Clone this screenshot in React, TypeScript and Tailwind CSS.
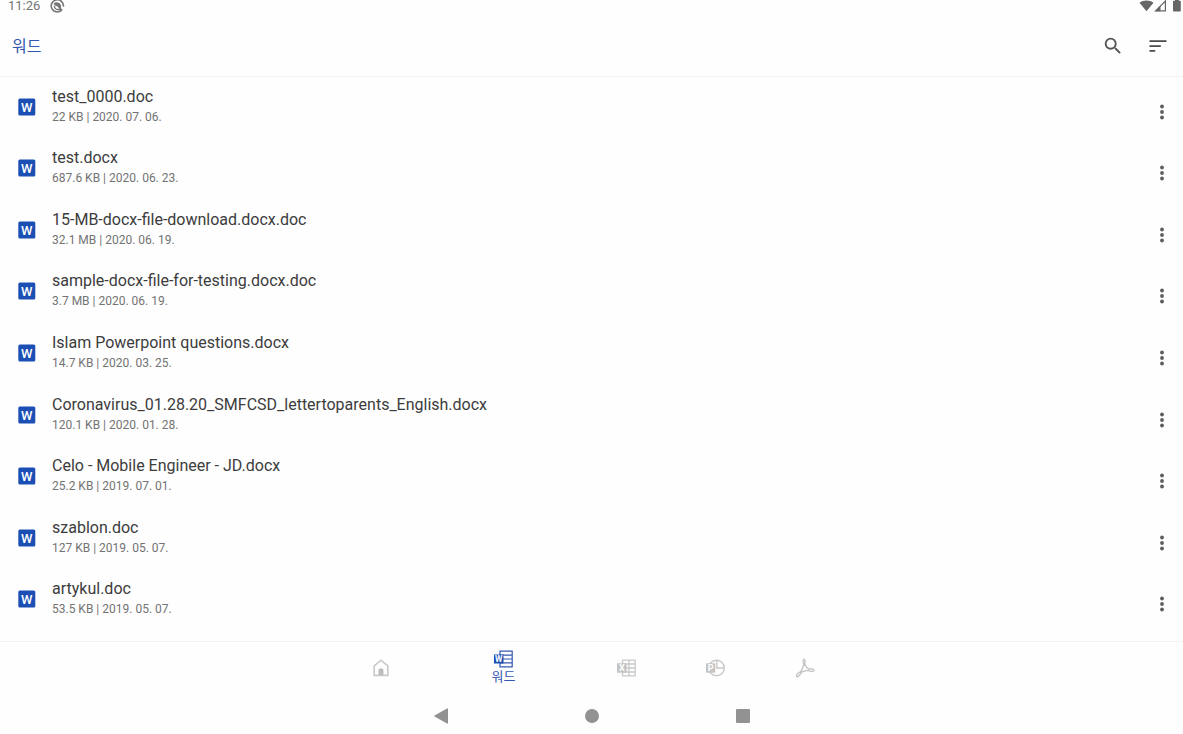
import type { ReactNode } from 'react';

type FileEntry = { name: string; size: string; date: string };

const files: FileEntry[] = [
  { name: 'test_0000.doc', size: '22 KB', date: '2020. 07. 06.' },
  { name: 'test.docx', size: '687.6 KB', date: '2020. 06. 23.' },
  { name: '15-MB-docx-file-download.docx.doc', size: '32.1 MB', date: '2020. 06. 19.' },
  { name: 'sample-docx-file-for-testing.docx.doc', size: '3.7 MB', date: '2020. 06. 19.' },
  { name: 'Islam Powerpoint questions.docx', size: '14.7 KB', date: '2020. 03. 25.' },
  { name: 'Coronavirus_01.28.20_SMFCSD_lettertoparents_English.docx', size: '120.1 KB', date: '2020. 01. 28.' },
  { name: 'Celo - Mobile Engineer - JD.docx', size: '25.2 KB', date: '2019. 07. 01.' },
  { name: 'szablon.doc', size: '127 KB', date: '2019. 05. 07.' },
  { name: 'artykul.doc', size: '53.5 KB', date: '2019. 05. 07.' },
];

function StatusBar() {
  return (
    <div className="flex h-4 shrink-0 items-start justify-between pr-px pl-2 text-[#757575]">
      <div className="flex items-start gap-2.5">
        <span className="text-[13px] leading-3">11:26</span>
        <svg width="15" height="13" viewBox="0 0 15 13" fill="none" stroke="currentColor" aria-hidden="true">
          <path d="M12.2 9.6A6.1 6.1 0 1 1 13.4 6.6" strokeWidth="1.6" />
          <path d="M3.6 3.4C6.3 1.4 9.6 2.3 11 5.4V9H9.6L7.6 6.6 5 5.4Z" fill="currentColor" stroke="none" />
          <path d="M4.4 5.6C4.2 7.9 5.6 9.5 7.6 9.5H12" strokeWidth="1.4" />
        </svg>
      </div>
      <svg width="43" height="12" viewBox="0 0 43 12" fill="#666" aria-hidden="true">
        <path d="M0.5 2.8C4.5 -0.4 10.5 -0.4 14.5 2.8L7.5 11.3Z" />
        <path d="M16.6 10.8 26.4 1V10.8Z" fill="none" stroke="#666" strokeWidth="1.2" />
        <path d="M16 11.2 21.5 5.7V11.2Z" />
        <path d="M34 1.5Q34 .7 34.8 .7H36V0H39.8V.7H41Q41.8 .7 41.8 1.5V10.5Q41.8 11.4 41 11.4H34.8Q34 11.4 34 10.5Z" />
      </svg>
    </div>
  );
}

function SearchIcon() {
  return (
    <svg width="22" height="22" viewBox="0 0 24 24" fill="#555" aria-hidden="true">
      <path d="M15.5 14h-.79l-.28-.27A6.47 6.47 0 0 0 16 9.5 6.5 6.5 0 1 0 9.5 16c1.61 0 3.09-.59 4.23-1.57l.27.28v.79l5 4.99L20.49 19l-4.99-5zm-6 0C7.01 14 5 11.99 5 9.5S7.01 5 9.5 5 14 7.01 14 9.5 11.99 14 9.5 14z" />
    </svg>
  );
}

function SortIcon() {
  return (
    <svg width="18" height="12" viewBox="0 0 18 12" fill="#4a4a4a" aria-hidden="true">
      <path d="M.5 .3h17v1.7H.5zM.5 5.2h11.3v1.7H.5zM.5 10h5.7v1.7H.5z" />
    </svg>
  );
}

function WordFileIcon() {
  return (
    <svg className="shrink-0" width="18" height="18" viewBox="0 0 18 18" aria-hidden="true">
      <rect x="0.3" y="0.5" width="17" height="17" rx="1.5" fill="#1c4fb4" />
      <text x="8.8" y="13.5" textAnchor="middle" fontSize="13" fontWeight="500" fill="#fff">
        W
      </text>
    </svg>
  );
}

function FileRow({ file }: { file: FileEntry }) {
  return (
    <li className="flex min-h-14 flex-1 items-center pr-[9px] pb-0.5 pl-[18px]">
      <a href="#" className="flex min-w-0 flex-1 items-center gap-4">
        <WordFileIcon />
        <span className="flex min-w-0 flex-col">
          <span className="truncate text-base leading-5 text-[#3c3c3c]">{file.name}</span>
          <span className="text-xs leading-5 text-[#737373]">
            {file.size} | {file.date}
          </span>
        </span>
      </a>
      <button type="button" aria-label={`${file.name} options`} className="flex w-6 justify-center pt-2.5">
        <svg width="6" height="16" viewBox="0 0 6 16" fill="#5c5c5c" aria-hidden="true">
          <circle cx="3" cy="2.5" r="1.9" />
          <circle cx="3" cy="8" r="1.9" />
          <circle cx="3" cy="13.5" r="1.9" />
        </svg>
      </button>
    </li>
  );
}

function HomeIcon() {
  return (
    <svg width="16" height="18" viewBox="0 0 16 18" aria-hidden="true">
      <path d="M1.2 6.8 8 1.2l6.8 5.6v9.6H1.2Z" fill="none" stroke="#c8c8c8" strokeWidth="1.6" />
      <path d="M5.5 10.5 8 9l2.5 1.5V16h-5Z" fill="#bdbdbd" />
    </svg>
  );
}

function WordIcon() {
  return (
    <svg width="19" height="18" viewBox="0 0 19 18" aria-hidden="true">
      <path d="M6 1.2H18.2V16.8H6ZM6 5.1H18M6 9H18M6 12.9H18" fill="none" stroke="#3557b0" strokeWidth="1.2" />
      <rect y="4.5" width="9.5" height="9" fill="#1c4fb4" />
      <text x="4.75" y="12" textAnchor="middle" fontSize="8.5" fontWeight="700" fill="#fff">
        W
      </text>
    </svg>
  );
}

function ExcelIcon() {
  return (
    <svg width="19" height="18" viewBox="0 0 19 18" aria-hidden="true">
      <path d="M5.5 1.2H18.2V16.8H5.5ZM5.5 5H18M5.5 9H18M5.5 13H18M12 1V17" fill="none" stroke="#c9c9c9" strokeWidth="1.3" />
      <rect y="4.3" width="9.6" height="9.4" fill="#c4c4c4" />
      <text x="4.8" y="12.2" textAnchor="middle" fontSize="9" fontWeight="700" fill="#fff">
        X
      </text>
    </svg>
  );
}

function PowerpointIcon() {
  return (
    <svg width="19" height="18" viewBox="0 0 19 18" aria-hidden="true">
      <circle cx="10.5" cy="9" r="7.8" fill="none" stroke="#c9c9c9" strokeWidth="1.4" />
      <path d="M10.8 1.2V9H18.3" fill="none" stroke="#c9c9c9" strokeWidth="1.4" />
      <rect y="4.3" width="9.2" height="9.4" fill="#c4c4c4" />
      <text x="4.6" y="12.2" textAnchor="middle" fontSize="9" fontWeight="700" fill="#fff">
        P
      </text>
    </svg>
  );
}

function PdfIcon() {
  return (
    <svg width="20" height="20" viewBox="0 0 20 20" fill="none" stroke="#c4c4c4" strokeWidth="1.4" strokeLinejoin="round" aria-hidden="true">
      <path d="M9 1.2C7.7 1.4 8 4.2 8.8 6.4 8.2 9 7 11.6 5.8 13.7 3.5 15 .9 16.9 1.5 18.3 2.4 19.9 5 17 6.8 14 9 13.2 11.4 12.6 13.4 12.4 15.6 13.6 18.7 13.9 18.9 12.4 19 10.9 16 10.8 13.7 11 12 10 10.5 8.3 9.7 6.5 10.2 4.4 10.4 1.2 9 1.2Z" />
    </svg>
  );
}

function TabLink({ label, children }: { label: string; children: ReactNode }) {
  return (
    <a href="#" aria-label={label} className="flex w-[89px] items-center justify-center pb-[3px]">
      {children}
    </a>
  );
}

function BottomTabs() {
  return (
    <nav className="flex h-14 shrink-0 justify-center border-t border-[#f3f3f3] pl-0.5">
      <TabLink label="홈"><HomeIcon /></TabLink>
      <a href="#" aria-current="page" className="flex w-[157px] flex-col items-center pt-2 text-[#3557b0]">
        <WordIcon />
        <span className="text-[13px] leading-[18px]">워드</span>
      </a>
      <TabLink label="엑셀"><ExcelIcon /></TabLink>
      <TabLink label="파워포인트"><PowerpointIcon /></TabLink>
      <TabLink label="PDF"><PdfIcon /></TabLink>
    </nav>
  );
}

function SystemNav() {
  return (
    <div className="flex h-[37px] shrink-0 items-center justify-center pt-px">
      <button type="button" aria-label="Back" className="flex w-[151px] justify-center">
        <svg width="14" height="16" viewBox="0 0 14 16" fill="#929292" aria-hidden="true">
          <path d="M13 .5Q14 0 14 1V15Q14 16 13 15.5L.5 8.6Q0 8 .5 7.4Z" />
        </svg>
      </button>
      <button type="button" aria-label="Home" className="flex w-[151px] justify-center">
        <svg width="14" height="14" viewBox="0 0 14 14" fill="#929292" aria-hidden="true">
          <circle cx="7" cy="7" r="7" />
        </svg>
      </button>
      <button type="button" aria-label="Recent apps" className="flex w-[151px] justify-center">
        <svg width="14" height="14" viewBox="0 0 14 14" fill="#929292" aria-hidden="true">
          <rect width="14" height="14" rx="1" />
        </svg>
      </button>
    </div>
  );
}

export default function App() {
  return (
    <div className="flex min-h-screen flex-col bg-[#fefefe] font-['Roboto','Noto_Sans_CJK_KR',sans-serif]">
      <StatusBar />
      <header className="flex h-[61px] shrink-0 items-center justify-between border-b border-[#f3f3f3] pr-4 pl-3">
        <h1 className="pt-0.5 text-base text-[#3557b0]">워드</h1>
        <div className="flex items-center gap-[25px]">
          <button type="button" aria-label="Search"><SearchIcon /></button>
          <button type="button" aria-label="Sort"><SortIcon /></button>
        </div>
      </header>
      <main className="flex flex-1 flex-col pb-2.5">
        <ul className="flex flex-1 flex-col">
          {files.map((file) => (
            <FileRow key={file.name} file={file} />
          ))}
        </ul>
      </main>
      <BottomTabs />
      <SystemNav />
    </div>
  );
}
